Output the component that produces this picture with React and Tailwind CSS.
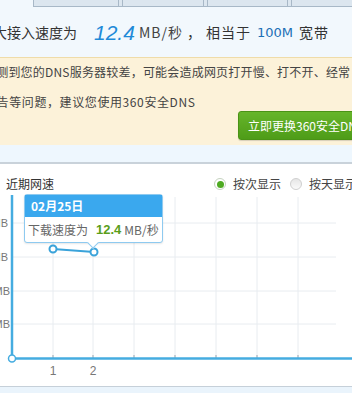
const cjk = "font-['Noto_Sans_CJK_SC','Liberation_Sans',sans-serif]";

const gridX = [53, 93, 134, 175, 216, 257, 298];
const gridY = [28, 62, 96, 129];

function SpeedChart() {
  return (
    <svg width="352" height="191" className="block">
      {gridY.map((y) => (
        <line key={y} x1="12" y1={y} x2="336" y2={y} stroke="#e8ecf0" strokeWidth="1" />
      ))}
      {gridX.map((x) => (
        <line key={x} x1={x} y1="2" x2={x} y2="163" stroke="#e8ecf0" strokeWidth="1" />
      ))}
      {gridX.map((x) => (
        <line key={"t" + x} x1={x} y1="160" x2={x} y2="163" stroke="#9aa7b2" strokeWidth="1" />
      ))}
      {gridY.map((y, i) => (
        <text
          key={"l" + y}
          x={i < 2 ? 8 : 10}
          y={y + 4}
          textAnchor="end"
          fontSize="11"
          fill="#777"
          fontFamily="Liberation Sans, sans-serif"
        >
          MB
        </text>
      ))}
      <line x1="12" y1="0" x2="12" y2="164" stroke="#45ace0" strokeWidth="2.5" />
      <line x1="12" y1="163.5" x2="352" y2="163.5" stroke="#45ace0" strokeWidth="2.5" />
      <circle cx="12" cy="163.5" r="3.5" fill="#fff" stroke="#45ace0" strokeWidth="1.5" />
      <line x1="53" y1="54" x2="94" y2="57" stroke="#3aa3da" strokeWidth="2" />
      <circle cx="53" cy="54" r="3.5" fill="#fff" stroke="#3aa3da" strokeWidth="2" />
      <circle cx="94" cy="57" r="3.5" fill="#fff" stroke="#3aa3da" strokeWidth="2" />
      <text x="53" y="180" textAnchor="middle" fontSize="12" fill="#777" fontFamily="Liberation Sans, sans-serif">
        1
      </text>
      <text x="93" y="180" textAnchor="middle" fontSize="12" fill="#777" fontFamily="Liberation Sans, sans-serif">
        2
      </text>
    </svg>
  );
}

function Radio({ checked, label }) {
  return (
    <label className="flex shrink-0 items-center gap-[7px] whitespace-nowrap">
      {checked ? (
        <span className="flex h-[12px] w-[12px] items-center justify-center rounded-full border border-[#c5d2bf] bg-white">
          <span className="h-[7px] w-[7px] rounded-full bg-[#4eaa22]" />
        </span>
      ) : (
        <span className="h-[12px] w-[12px] rounded-full border border-[#cfcfcf] bg-gradient-to-b from-[#e6e6e6] to-[#fafafa]" />
      )}
      <span className="text-[12px] text-[#444]">{label}</span>
    </label>
  );
}

export default function App() {
  return (
    <div className={`relative h-[393px] w-[352px] overflow-hidden bg-white ${cjk}`}>
      <div className="flex h-[7px] bg-[#f2f8fd]">
        <div className="w-[33px]" />
        <div className="flex flex-1 border-b border-l border-[#a8b8c7] bg-[#dce6ef]">
          <div className="w-[85px] border-r border-[#a8b8c7]" />
          <div className="w-[4px] border-r border-[#a8b8c7]" />
          <div className="w-[81px] border-r border-[#a8b8c7]" />
          <div className="w-[4px] border-r border-[#a8b8c7]" />
          <div className="w-[80px] border-r border-[#a8b8c7]" />
          <div className="w-[4px] border-r border-[#a8b8c7]" />
        </div>
      </div>

      <div className="flex h-[50px] shrink-0 items-center whitespace-nowrap bg-[#f2f8fd] pt-[1px]">
        <span className="-ml-[21px] shrink-0 text-[14px] text-[#333]">最大接入速度为</span>
        <span className="ml-[17px] shrink-0 font-['Liberation_Sans',sans-serif] text-[21px] italic leading-none text-[#1f8ad8]">
          12.4
        </span>
        <span className="ml-[4px] shrink-0 text-[14px] tracking-[1px] text-[#444]">MB/秒</span>
        <span className="ml-[4px] shrink-0 text-[14px] text-[#333]">，</span>
        <span className="ml-[5px] shrink-0 text-[14px] tracking-[1px] text-[#333]">相当于</span>
        <span className="ml-[6px] shrink-0 font-['DejaVu_Sans',sans-serif] text-[13px] text-[#1c6fb6]">100M</span>
        <span className="ml-[6px] shrink-0 text-[14px] tracking-[1px] text-[#333]">宽带</span>
      </div>

      <div className="h-[88px] border-t border-[#efdca9] bg-[#fcf2d9] whitespace-nowrap">
        <p className="-ml-[16px] mt-[4px] text-[12px] leading-[20px] tracking-[0.2px] text-[#444]">
          检测到您的DNS服务器较差，可能会造成网页打开慢、打不开、经常
        </p>
        <p className="-ml-[16px] mt-[10px] text-[12px] leading-[20px] tracking-[0.6px] text-[#444]">
          广告等问题，建议您使用360安全DNS
        </p>
        <div className="flex">
          <button className="ml-[238px] mt-[-1px] h-[29px] shrink-0 whitespace-nowrap rounded-[3px] border border-[#4a9316] bg-gradient-to-b from-[#66b52a] to-[#4e9c18] pl-[9px] pr-[6px] text-[12px] text-white shadow-[0_1px_1px_rgba(0,0,0,0.15)]">
            立即更换360安全DNS
          </button>
        </div>
      </div>

      <div className="h-[19px] border-b-2 border-[#c9d2da] bg-[#eef7fe]" />

      <div className="relative">
        <div className="flex h-[31px] items-center pt-[9px]">
          <span className="ml-[6px] text-[12px] text-[#333]">近期网速</span>
          <div className="ml-auto flex w-[138px] shrink-0 items-center gap-[9px]">
            <Radio checked label="按次显示" />
            <Radio label="按天显示" />
          </div>
        </div>
        <SpeedChart />

        <div className="absolute left-[24px] top-[30px] w-[139px] rounded-[3px] border border-[#8ecaf0] bg-white shadow-[0_1px_2px_rgba(0,0,0,0.1)]">
          <div className="flex h-[22px] items-center bg-[#3aa8ee] pl-[6px] text-[12px] font-bold text-white">
            02月25日
          </div>
          <div className="flex h-[25px] items-center whitespace-nowrap pl-[3px] text-[12px] text-[#666]">
            <span>下载速度为</span>
            <span className="ml-[8px] font-['Liberation_Sans',sans-serif] text-[13px] font-bold text-[#5a9e1a]">12.4</span>
            <span className="ml-[3px]">MB/秒</span>
          </div>
          <div className="absolute -bottom-[5px] left-[64px] h-[8px] w-[8px] rotate-45 border-b border-r border-[#8ecaf0] bg-white" />
        </div>
      </div>

      <div className="h-[5px] border-t border-[#c6d0d9] bg-[#eaf4fc]" />
      <div className="h-[20px] bg-[#eaf4fc]" />
    </div>
  );
}
